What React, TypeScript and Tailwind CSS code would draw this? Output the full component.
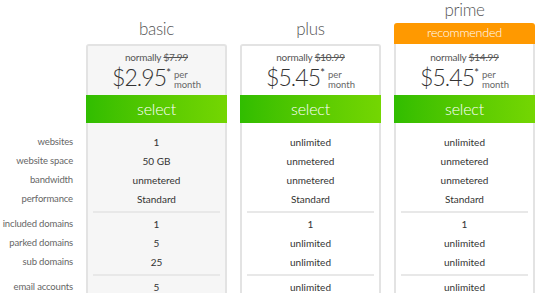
import React from "react";

const labels1 = ["websites", "website space", "bandwidth", "performance"];
const labels2 = ["included domains", "parked domains", "sub domains"];

type Plan = {
  name: string;
  old: string;
  price: string;
  v1: string[];
  v2: string[];
  v3: string;
  rec?: boolean;
  bg: string;
};

const plans: Plan[] = [
  { name: "basic", old: "$7.99", price: "$2.95", v1: ["1", "50 GB", "unmetered", "Standard"], v2: ["1", "5", "25"], v3: "5", bg: "bg-[#f6f6f6]" },
  { name: "plus", old: "$10.99", price: "$5.45", v1: ["unlimited", "unmetered", "unmetered", "Standard"], v2: ["1", "unlimited", "unlimited"], v3: "unlimited", bg: "bg-white" },
  { name: "prime", old: "$14.99", price: "$5.45", v1: ["unlimited", "unmetered", "unmetered", "Standard"], v2: ["1", "unlimited", "unlimited"], v3: "unlimited", rec: true, bg: "bg-white" },
];

function Row({ children, className = "" }: { children: React.ReactNode; className?: string }) {
  return <div className={`h-[19px] shrink-0 flex items-center whitespace-nowrap ${className}`}>{children}</div>;
}

function Sep({ line }: { line: boolean }) {
  return (
    <div className="py-[2px] px-[5px] shrink-0">
      <div className={`h-[2px] ${line ? "bg-[#e8e8e8]" : ""}`} />
    </div>
  );
}

function Card({ p }: { p: Plan }) {
  return (
    <div className="w-[141px] flex flex-col shrink-0">
      {p.rec ? (
        <>
          <div className="h-[23px] shrink-0 flex items-start justify-center text-[17px] leading-[20px] font-light text-[#555] tracking-[-0.3px]">{p.name}</div>
          <div className="h-[21px] shrink-0 bg-[#ff9900] rounded-t-[3px] flex items-center justify-center text-white text-[12.5px] font-light tracking-[-0.2px]">recommended</div>
        </>
      ) : (
        <div className="h-[44px] shrink-0 flex items-start justify-center pt-[19px] text-[17px] leading-[20px] font-light text-[#555] tracking-[-0.3px]">{p.name}</div>
      )}
      <div className={`h-[51px] shrink-0 border-x-2 border-[#e3e3e3] ${p.rec ? "" : "border-t-2 rounded-t-[3px]"} ${p.bg} flex flex-col items-center`}>
        <div className={`${p.rec ? "mt-[7px]" : "mt-[5px]"} text-[10px] leading-[12px] text-[#555] tracking-[-0.2px]`}>
          normally <span className="line-through">{p.old}</span>
        </div>
        <div className="flex items-start mt-[1px]">
          <span className="text-[23px] leading-[26px] font-light text-[#333] tracking-[-0.9px]">{p.price}</span>
          <span className="text-[11px] leading-[11px] text-[#333] mt-[3px] mr-[3px]">*</span>
          <span className="text-[9.5px] leading-[10px] text-[#666] mt-[6px]">per<br />month</span>
        </div>
      </div>
      <div className="h-[28px] shrink-0 bg-gradient-to-r from-[#30bd00] to-[#74d602] flex items-center justify-center text-white text-[16px] font-light tracking-[-0.2px]">select</div>
      <div className={`border-x-2 border-[#e3e3e3] ${p.bg} pt-[10px] text-[10px] text-[#333]`}>
        {p.v1.map((v, i) => (
          <Row key={i} className="justify-center">{v}</Row>
        ))}
        <Sep line />
        {p.v2.map((v, i) => (
          <Row key={i} className="justify-center">{v}</Row>
        ))}
        <Sep line />
        <Row className="justify-center">{p.v3}</Row>
        <div className="h-[20px]" />
      </div>
    </div>
  );
}

export default function App() {
  return (
    <div className="w-[550px] h-[293px] overflow-hidden bg-white flex items-start" style={{ fontFamily: "Lato, 'Open Sans', sans-serif" }}>
      <div className="w-[86px] shrink-0 pt-[133px] pr-[13px] text-[9.5px] text-[#666] tracking-[-0.15px] text-right">
        {labels1.map((l) => (
          <Row key={l} className="justify-end">{l}</Row>
        ))}
        <Sep line={false} />
        {labels2.map((l) => (
          <Row key={l} className="justify-end">{l}</Row>
        ))}
        <Sep line={false} />
        <Row className="justify-end">email accounts</Row>
      </div>
      <div className="flex gap-[13px] items-start shrink-0">
        {plans.map((p) => (
          <Card key={p.name} p={p} />
        ))}
      </div>
    </div>
  );
}
